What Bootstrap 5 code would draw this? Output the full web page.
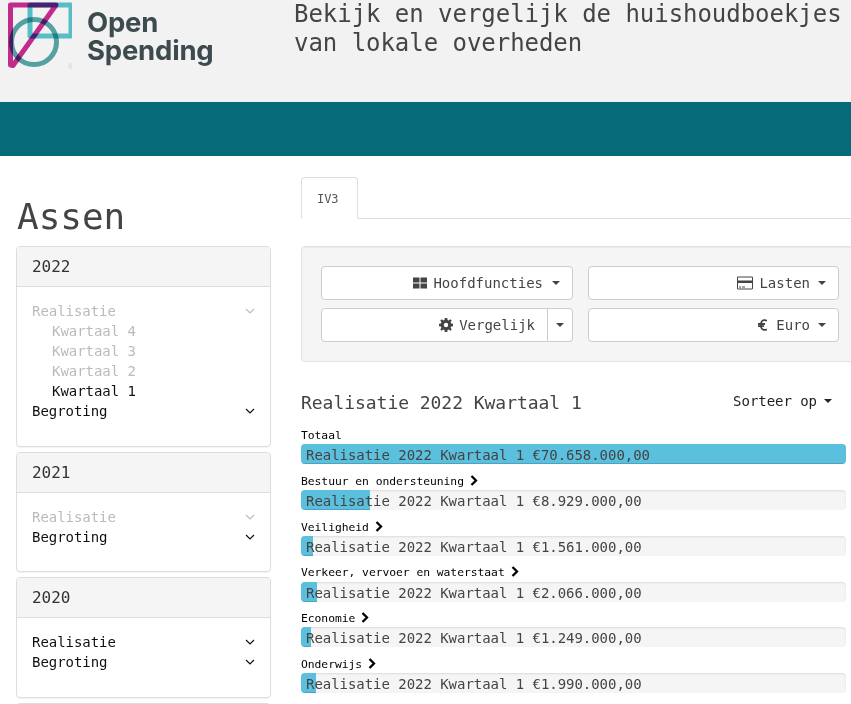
<!DOCTYPE html>
<html lang="nl"><head><meta charset="utf-8"><title>Open Spending</title>
<link href="https://cdn.jsdelivr.net/npm/bootstrap@5.3.0/dist/css/bootstrap.min.css" rel="stylesheet">
<style>
html,body{overflow:hidden;height:704px}
body{font-family:"DejaVu Sans Mono","Liberation Mono",monospace;font-size:14px;line-height:20px;color:#212529;background:#fff;letter-spacing:-.04px}
.top-head{height:102px;background:#f2f2f2}
.logo-mark{height:72px;flex:none;margin-top:-1px;width:72px}
.logo-mark g>*{mix-blend-mode:multiply}
.logo-word{font-family:Inter,"Open Sans",sans-serif;font-weight:700;font-size:27.5px;line-height:28px;color:#3d4b4e;margin:8px 0 0 15px;letter-spacing:-.2px;width:207px;flex:none}
.tagline{font-size:24px;line-height:29px;color:#444;margin:0;white-space:nowrap;font-weight:400}
.band{height:54px;background:#066a78}
.page-grid{display:grid;grid-template-columns:255px 560px;gap:30px;padding:21px 0 0 16px;width:900px}
.axes-title{font-size:36px;line-height:40px;margin:20px 0 9px 1px;color:#444;font-weight:400}
.year-card{border:1px solid #ddd;border-radius:4px;margin-bottom:5px;box-shadow:0 1px 1px rgba(0,0,0,.05)}
.year-head{height:40px;background:#f5f5f5;border-bottom:1px solid #ddd;font-size:16px;line-height:40px;padding-left:15px;color:#333;border-radius:3px 3px 0 0}
.year-body{padding:14px 15px 24.7px;color:#111}
.line-row{display:flex;justify-content:space-between;align-items:center;height:20px;white-space:nowrap}
.line-row svg{width:10px;height:10px}
.is-off{color:#bbb}
.sub-row{padding-left:20px;height:20px}
.tab-strip{border-bottom:1px solid #ddd;height:42px;width:550px}
.tab-one{display:inline-block;height:42px;padding:11px 15px 0;width:57px;border:1px solid #ddd;border-bottom-color:#fff;border-radius:4px 4px 0 0;font-size:12px;color:#555;line-height:20px;background:#fff}
.filter-well{background:#f5f5f5;border:1px solid #e3e3e3;border-radius:4px;margin-top:27px;padding:19px;height:116px;box-shadow:inset 0 1px 1px rgba(0,0,0,.05)}
.filter-grid{display:grid;grid-template-columns:252px 251px;column-gap:15px;row-gap:8px}
.pick-btn{height:34px;background:#fff;border:1px solid #ccc;border-radius:4px;color:#444;font-size:14px;line-height:20px;padding:6px 12px;display:flex;justify-content:flex-end;align-items:center;gap:6px;width:100%}
.pick-btn svg{width:14px;height:14px;flex:none}
.pick-btn svg.wide-ico{width:16px}
.pick-btn svg.euro-ico{width:9px;margin-right:3px}
.caret-mark{display:inline-block;width:0;height:0;border-top:4px solid currentColor;border-left:4px solid transparent;border-right:4px solid transparent;margin-left:3px;flex:none}
.caret-mark.snug{margin-left:2px}
.pick-pair{display:flex}
.pick-pair .pick-btn:first-child{border-radius:4px 0 0 4px;flex:1;padding-right:12px}
.pick-pair .pick-btn:last-child{border-radius:0 4px 4px 0;border-left:0;width:25px;padding:0;justify-content:center}
.pick-pair .pick-btn:last-child .caret-mark{margin:0}
.result-head{display:flex;justify-content:space-between;width:545px;margin-top:29px;height:24px}
.result-title{font-size:18px;line-height:24px;font-weight:400;color:#444;margin:0}
.sort-pick{display:flex;align-items:center;gap:4px;padding-right:14px;margin-top:-5px;color:#222}
.bar-label{font-size:11.35px;line-height:16px;height:17.16px;color:#000;display:flex;align-items:flex-start;gap:5px;white-space:nowrap}
.bar-label svg{width:10px;height:11px;margin-top:2px}
.data-bar{position:relative;height:20px;width:545px;background:#f5f5f5;border-radius:4px;margin-bottom:8.6px;overflow:hidden;box-shadow:inset 0 1px 2px rgba(0,0,0,.1)}
.data-fill{height:100%;background:#5bc0de;box-shadow:inset 0 -1px 0 rgba(0,0,0,.15)}
.data-text{position:absolute;left:5px;top:0;line-height:22px;color:#444;white-space:nowrap}
.results{margin-top:12.2px}
</style></head>
<body>
<header class="top-head d-flex">
<svg class="logo-mark" viewBox="0 0 72 72" role="img" aria-label="Open Spending logo"><g fill="none" stroke-linejoin="round" stroke-linecap="round"><rect x="30" y="6" width="41" height="31" stroke="#5cc8d0" stroke-width="5" /><circle cx="34" cy="43" r="22.5" stroke="#5aa9ab" stroke-width="5"/><path d="M10.500 6H56L13 66.500L10.500 66Z" stroke="#cc2d94" stroke-width="5"/></g><circle cx="71" cy="67" r="3" fill="#e4e4e4"/></svg>
<div class="logo-word">Open<br>Spending</div>
<p class="tagline">Bekijk en vergelijk de huishoudboekjes<br>van lokale overheden</p>
</header>
<div class="band"></div>
<main class="page-grid">
<aside>
<h1 class="axes-title">Assen</h1>
<section class="year-card"><div class="year-head">2022</div><div class="year-body">
<div class="line-row is-off">Realisatie<svg viewBox="0 0 10 10"><path d="M1 3l4 4 4-4" fill="none" stroke="currentColor" stroke-width="1.2"/></svg></div>
<div class="sub-row is-off">Kwartaal 4</div><div class="sub-row is-off">Kwartaal 3</div><div class="sub-row is-off">Kwartaal 2</div><div class="sub-row">Kwartaal 1</div>
<div class="line-row">Begroting<svg viewBox="0 0 10 10"><path d="M1 3l4 4 4-4" fill="none" stroke="currentColor" stroke-width="1.2"/></svg></div>
</div></section>
<section class="year-card"><div class="year-head">2021</div><div class="year-body">
<div class="line-row is-off">Realisatie<svg viewBox="0 0 10 10"><path d="M1 3l4 4 4-4" fill="none" stroke="currentColor" stroke-width="1.2"/></svg></div>
<div class="line-row">Begroting<svg viewBox="0 0 10 10"><path d="M1 3l4 4 4-4" fill="none" stroke="currentColor" stroke-width="1.2"/></svg></div>
</div></section>
<section class="year-card"><div class="year-head">2020</div><div class="year-body">
<div class="line-row">Realisatie<svg viewBox="0 0 10 10"><path d="M1 3l4 4 4-4" fill="none" stroke="currentColor" stroke-width="1.2"/></svg></div>
<div class="line-row">Begroting<svg viewBox="0 0 10 10"><path d="M1 3l4 4 4-4" fill="none" stroke="currentColor" stroke-width="1.2"/></svg></div>
</div></section>
<section class="year-card"><div class="year-head"></div></section>
</aside>
<div>
<nav class="tab-strip"><span class="tab-one">IV3</span></nav>
<div class="filter-well"><div class="filter-grid">
<button class="pick-btn"><svg viewBox="0 0 14 14"><path fill="currentColor" d="M0 1.500h6.500v5H0zM7.500 1.500H14v5H7.500zM0 7.500h6.500v5H0zM7.500 7.500H14v5H7.500z"/></svg>Hoofdfuncties <span class="caret-mark"></span></button>
<button class="pick-btn"><svg class="wide-ico" viewBox="0 0 16 14"><path fill="currentColor" fill-rule="evenodd" d="M1.200 .5h13.600c.7 0 1.200.5 1.200 1.200v10.600c0 .7-.5 1.200-1.200 1.200H1.200C.5 13.500 0 13 0 12.300V1.700C0 1 .5.500 1.200.500zM1 4.500h14V1.700c0-.1-.1-.2-.2-.2H1.200c-.1 0-.2.100-.2.200zM1 7v5.300c0 .1.100.2.200.2h13.600c.1 0 .2-.1.200-.2V7zM2 10.500h2v1H2zM5 10.500h3v1H5z"/></svg>Lasten <span class="caret-mark snug"></span></button>
<div class="pick-pair"><button class="pick-btn"><svg viewBox="0 0 14 14"><path fill="currentColor" fill-rule="evenodd" d="M5.800 0h2.400l.4 1.900 1.100.5L11.400 1.300l1.300 1.300-1.100 1.700.5 1.100 1.900.4v2.400l-1.900.4-.5 1.100 1.100 1.700-1.300 1.300-1.700-1.100-1.100.5-.4 1.900H5.800l-.4-1.900-1.100-.5-1.700 1.100-1.300-1.300 1.100-1.700-.5-1.100L0 8.200V5.800l1.900-.4.500-1.100-1.100-1.700 1.300-1.300 1.700 1.100 1.100-.5zM7 4.800a2.200 2.200 0 1 0 0 4.400 2.200 2.200 0 0 0 0-4.400z"/></svg>Vergelijk</button><button class="pick-btn" aria-label="Meer"><span class="caret-mark"></span></button></div>
<button class="pick-btn"><svg class="euro-ico" viewBox="0 0 9 14"><path fill="none" stroke="currentColor" stroke-width="1.800" d="M9 2.800C7 1.500 4.200 1.800 3.200 4.500c-.7 2-.7 3 0 5 1 2.700 3.800 3 5.800 1.700M0 6h7M0 8.200h6"/></svg>Euro <span class="caret-mark snug"></span></button>
</div></div>
<div class="result-head"><h2 class="result-title">Realisatie 2022 Kwartaal 1</h2><div class="sort-pick">Sorteer op <span class="caret-mark"></span></div></div>
<div class="results">
<div class="bar-label">Totaal</div><div class="data-bar"><div class="data-fill" style="width:100%"></div><span class="data-text">Realisatie 2022 Kwartaal 1 €70.658.000,00</span></div>
<div class="bar-label">Bestuur en ondersteuning <svg viewBox="0 0 10 11"><path d="M2.500 1l4.500 4.500-4.500 4.500" fill="none" stroke="#000" stroke-width="2.300"/></svg></div><div class="data-bar"><div class="data-fill" style="width:12.64%"></div><span class="data-text">Realisatie 2022 Kwartaal 1 €8.929.000,00</span></div>
<div class="bar-label">Veiligheid <svg viewBox="0 0 10 11"><path d="M2.500 1l4.500 4.500-4.500 4.500" fill="none" stroke="#000" stroke-width="2.300"/></svg></div><div class="data-bar"><div class="data-fill" style="width:2.21%"></div><span class="data-text">Realisatie 2022 Kwartaal 1 €1.561.000,00</span></div>
<div class="bar-label">Verkeer, vervoer en waterstaat <svg viewBox="0 0 10 11"><path d="M2.500 1l4.500 4.500-4.500 4.500" fill="none" stroke="#000" stroke-width="2.300"/></svg></div><div class="data-bar"><div class="data-fill" style="width:2.92%"></div><span class="data-text">Realisatie 2022 Kwartaal 1 €2.066.000,00</span></div>
<div class="bar-label">Economie <svg viewBox="0 0 10 11"><path d="M2.500 1l4.500 4.500-4.500 4.500" fill="none" stroke="#000" stroke-width="2.300"/></svg></div><div class="data-bar"><div class="data-fill" style="width:1.77%"></div><span class="data-text">Realisatie 2022 Kwartaal 1 €1.249.000,00</span></div>
<div class="bar-label">Onderwijs <svg viewBox="0 0 10 11"><path d="M2.500 1l4.500 4.500-4.500 4.500" fill="none" stroke="#000" stroke-width="2.300"/></svg></div><div class="data-bar"><div class="data-fill" style="width:2.82%"></div><span class="data-text">Realisatie 2022 Kwartaal 1 €1.990.000,00</span></div>
<div class="bar-label">Sport, cultuur en recreatie <svg viewBox="0 0 10 11"><path d="M2.500 1l4.500 4.500-4.500 4.500" fill="none" stroke="#000" stroke-width="2.300"/></svg></div>
</div>
</div>
</main>
<script src="https://cdn.jsdelivr.net/npm/bootstrap@5.3.0/dist/js/bootstrap.bundle.min.js"></script>
</body></html>
